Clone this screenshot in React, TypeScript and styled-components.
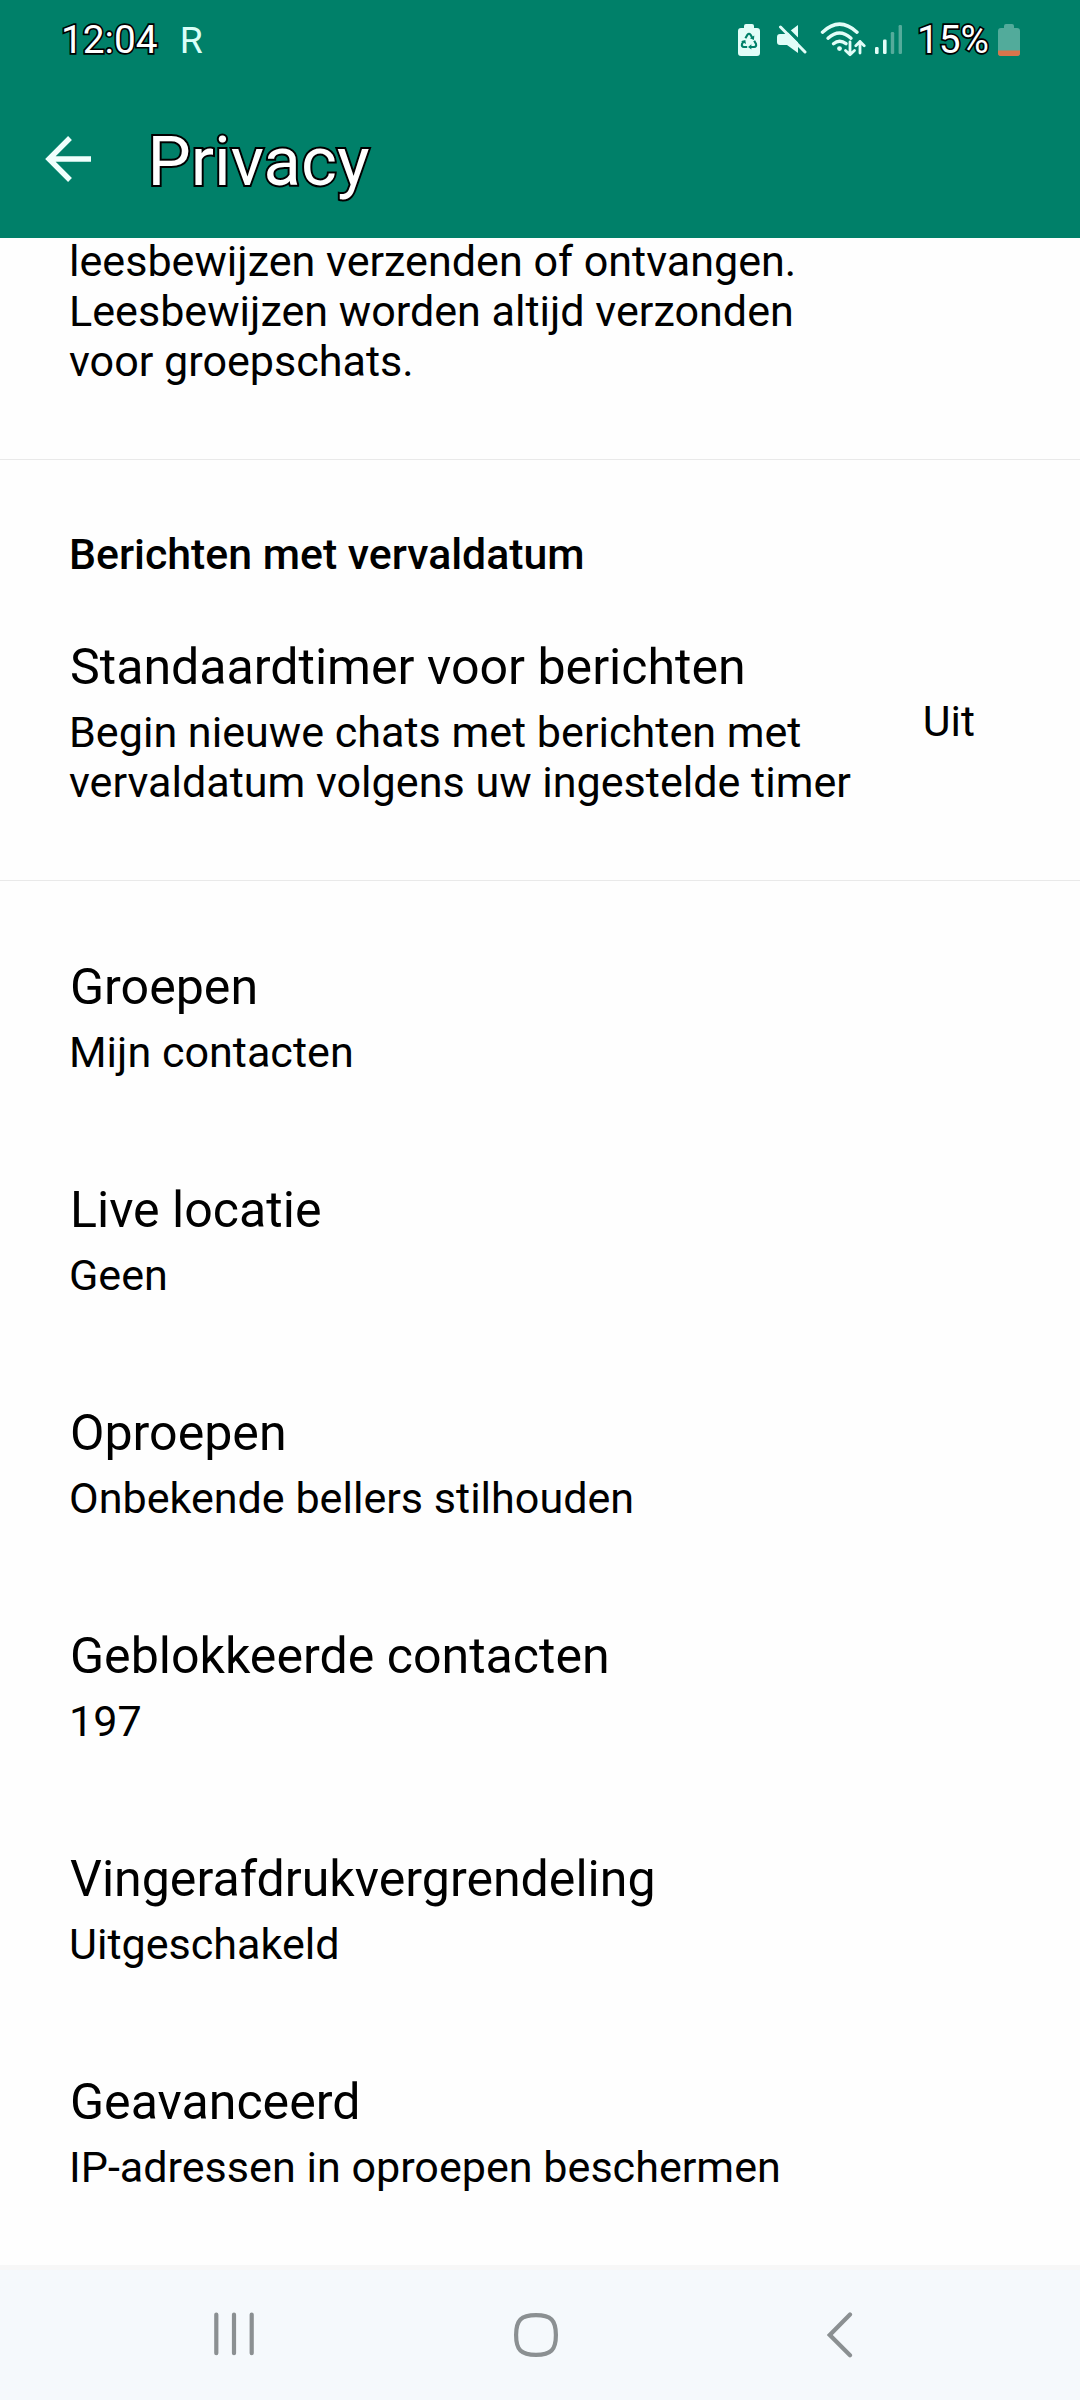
import React from "react";
import styled, { createGlobalStyle } from "styled-components";

const GlobalStyle = createGlobalStyle`
  * { box-sizing: border-box; }
  body { margin: 0; background: #fff; font-family: Roboto, "Liberation Sans", sans-serif; color: #000; }
`;

const Screen = styled.div`
  width: 1080px;
  height: 2400px;
  display: flex;
  flex-direction: column;
  overflow: hidden;
  background: #fefefe;
`;

const Header = styled.header`
  flex: none;
  height: 238px;
  background: #008069;
  display: flex;
  flex-direction: column;
`;

const StatusBar = styled.div`
  height: 80px;
  display: flex;
  justify-content: space-between;
  padding: 0 60px 0 61px;
`;

const StatusGroup = styled.div`
  display: flex;
  align-items: flex-start;
`;

const Outlined = styled.span`
  color: #fff;
  -webkit-text-stroke: 3.4px #000;
  paint-order: stroke fill;
`;

const StatusText = styled(Outlined)<{ $left?: number }>`
  font-size: 38.8px;
  line-height: 46px;
  margin-top: 17px;
  margin-left: ${(p) => p.$left ?? 0}px;
`;

const RoamLetter = styled.span`
  font-size: 37.3px;
  font-weight: 400;
  line-height: 46px;
  margin: 17px 0 0 22px;
  color: #d9fff8;
`;

const StatusIcon = styled.svg<{ $top: number; $left?: number }>`
  display: block;
  flex: none;
  margin-top: ${(p) => p.$top}px;
  margin-left: ${(p) => p.$left ?? 0}px;
`;

const TitleBar = styled.div`
  height: 158px;
  display: flex;
  align-items: center;
  padding: 0 0 0 45px;
`;

const Title = styled(Outlined)`
  font-size: 68.7px;
  line-height: 80px;
  margin: 6px 0 0 56.5px;
  -webkit-text-stroke-width: 4px;
`;

const Content = styled.main`
  flex: 1;
  margin-top: -2px;
`;

const Section = styled.section<{ $height: number; $top?: number; $divided?: boolean }>`
  height: ${(p) => p.$height}px;
  padding: ${(p) => p.$top ?? 0}px 69px 0;
  border-bottom: ${(p) => (p.$divided ? "1px solid #e9e9e9" : "none")};
`;

const Body = styled.p`
  margin: 0;
  font-size: 43.1px;
  line-height: 50px;
  white-space: pre-line;
`;

const TimerValue = styled(Body)`
  font-size: 42.8px;
  margin-bottom: 5px;
`;

const SectionHeading = styled.h2`
  margin: 0 0 60px;
  font-size: 42.8px;
  line-height: 50px;
  font-weight: 500;
`;

const ItemTitle = styled.h3`
  margin: 0 0 12px;
  padding-left: 1px;
  font-size: 50.1px;
  line-height: 57px;
  font-weight: 400;
`;

const TimerRow = styled.div`
  display: flex;
  align-items: center;
  justify-content: space-between;
  padding-right: 36px;
`;

const ItemList = styled.div`
  display: flex;
  flex-direction: column;
  gap: 104px;
`;

const NavBar = styled.nav`
  flex: none;
  height: 135px;
  background: #f5f9fc;
  border-top: 5px solid #f7f7f7;
  display: flex;
  align-items: flex-start;
  padding: 42px 0 0 214px;
`;

const NavIcon = styled.svg<{ $left?: number }>`
  display: block;
  margin-left: ${(p) => p.$left ?? 0}px;
  fill: none;
  stroke: #8b9092;
  stroke-width: 4.2;
  stroke-linecap: round;
`;

const items = [
  ["Groepen", "Mijn contacten"],
  ["Live locatie", "Geen"],
  ["Oproepen", "Onbekende bellers stilhouden"],
  ["Geblokkeerde contacten", "197"],
  ["Vingerafdrukvergrendeling", "Uitgeschakeld"],
  ["Geavanceerd", "IP-adressen in oproepen beschermen"],
];

const tint = "#e2fdf8";

function BatterySaver() {
  return (
    <StatusIcon $top={24} width="22" height="32" viewBox="0 0 22 32">
      <path fill={tint} d="M6 4V2q0-2 2-2h6q2 0 2 2v2h3q3 0 3 3v22q0 3-3 3H3q-3 0-3-3V7q0-3 3-3z" />
      <g fill="none" stroke="#008069" strokeWidth="2.1">
        <path d="M7.4 14.2 9.5 10.6q1.5-1.8 3 0l1.8 3.1" />
        <path d="M16.2 16.8 18 20q.8 2.7-2 3h-3.6" />
        <path d="M9.2 23H6q-2.8-.3-2-3l1.8-3" />
      </g>
      <g fill="#008069">
        <path d="m16.3 11.6-.4 4.5-4-1.8z" />
        <path d="m13.4 20.2v5.4l-3.4-2.7z" />
        <path d="m3 17.3 4.3-1.3.7 4z" />
      </g>
    </StatusIcon>
  );
}

function Mute() {
  return (
    <StatusIcon $top={24} $left={17} width="30" height="31" viewBox="0 0 30 31">
      <path fill={tint} d="M3 10h6L21 1v28L10 21H3q-3 0-3-3v-5q0-3 3-3z" />
      <path stroke="#008069" strokeWidth="3.5" d="M5.5.5 31 26" />
      <path stroke={tint} strokeWidth="3" strokeLinecap="round" d="M3.5 3 28 28" />
    </StatusIcon>
  );
}

function Wifi() {
  return (
    <StatusIcon $top={22} $left={13} width="46" height="36" viewBox="0 0 46 36">
      <g fill="none" stroke={tint} strokeWidth="3.4" strokeLinecap="round">
        <path d="M2.5 10.2Q19.5-6 37 10.2" />
        <path d="M8 16.2Q19.5 5.8 31 16.2" />
        <path d="M13.5 21.7q6-5 12.5 0" />
      </g>
      <circle cx="19.5" cy="26.6" r="2.4" fill={tint} />
      <g fill="none" stroke={tint} strokeWidth="2.8" strokeLinecap="round" strokeLinejoin="round">
        <path d="M30 20v12.5M25.5 28.5l4.5 4.2 4.5-4.2" />
        <path d="M40 31V19.5M35.8 23.7l4.2-4.2 4.2 4.2" />
      </g>
    </StatusIcon>
  );
}

function Signal() {
  return (
    <StatusIcon $top={25} $left={9} width="27" height="29" viewBox="0 0 27 29">
      <g fill={tint}>
        <rect x="0" y="22" width="3.6" height="7" rx="1.2" />
        <rect x="8" y="14.5" width="3.6" height="14.5" rx="1.2" />
      </g>
      <g fill="#55ab9b">
        <rect x="15.8" y="7" width="3.4" height="22" rx="1.2" />
        <rect x="23.6" y="0" width="3.4" height="29" rx="1.2" />
      </g>
    </StatusIcon>
  );
}

function Battery() {
  return (
    <StatusIcon $top={24} $left={9} width="22" height="32" viewBox="0 0 22 32">
      <path fill="#52ab9b" d="M6 4V2q0-2 2-2h6q2 0 2 2v2h3q3 0 3 3v22q0 3-3 3H3q-3 0-3-3V7q0-3 3-3z" />
      <path fill="#d9754c" d="M0 26.5h22V29q0 3-3 3H3q-3 0-3-3z" />
    </StatusIcon>
  );
}

export default function App() {
  return (
    <Screen>
      <GlobalStyle />
      <Header>
        <StatusBar>
          <StatusGroup>
            <StatusText>12:04</StatusText>
            <RoamLetter>R</RoamLetter>
          </StatusGroup>
          <StatusGroup>
            <BatterySaver />
            <Mute />
            <Wifi />
            <Signal />
            <StatusText $left={15}>15%</StatusText>
            <Battery />
          </StatusGroup>
        </StatusBar>
        <TitleBar>
          <svg width="46" height="46" viewBox="0 0 46 46" fill="none" stroke="#f0fffd" strokeWidth="5.4">
            <path d="M46 23H4M25 2 4 23l21 21" />
          </svg>
          <Title>Privacy</Title>
        </TitleBar>
      </Header>
      <Content>
        <Section $height={224} $top={1} $divided>
          <Body>{"leesbewijzen verzenden of ontvangen.\nLeesbewijzen worden altijd verzonden\nvoor groepschats."}</Body>
        </Section>
        <Section $height={421} $top={69} $divided>
          <SectionHeading>Berichten met vervaldatum</SectionHeading>
          <TimerRow>
            <div>
              <ItemTitle>Standaardtimer voor berichten</ItemTitle>
              <Body>{"Begin nieuwe chats met berichten met\nvervaldatum volgens uw ingestelde timer"}</Body>
            </div>
            <TimerValue>Uit</TimerValue>
          </TimerRow>
        </Section>
        <Section $height={1384} $top={78}>
          <ItemList>
            {items.map(([title, value]) => (
              <div key={title}>
                <ItemTitle>{title}</ItemTitle>
                <Body>{value}</Body>
              </div>
            ))}
          </ItemList>
        </Section>
      </Content>
      <NavBar>
        <NavIcon width="40" height="44" viewBox="0 0 40 44">
          <path d="M2.3 2.6v38.6M20 2.6v38.6M37.7 2.6v38.6" />
        </NavIcon>
        <NavIcon $left={260} width="44" height="46" viewBox="0 0 44 46">
          <path d="M22 3.1C37 3.1 41.9 8 41.9 23S37 42.9 22 42.9 2.1 38 2.1 23 7 3.1 22 3.1z" />
        </NavIcon>
        <NavIcon $left={269} width="26" height="46" viewBox="0 0 26 46">
          <path d="M23 2.5 2.8 23 23 43.2" />
        </NavIcon>
      </NavBar>
    </Screen>
  );
}
